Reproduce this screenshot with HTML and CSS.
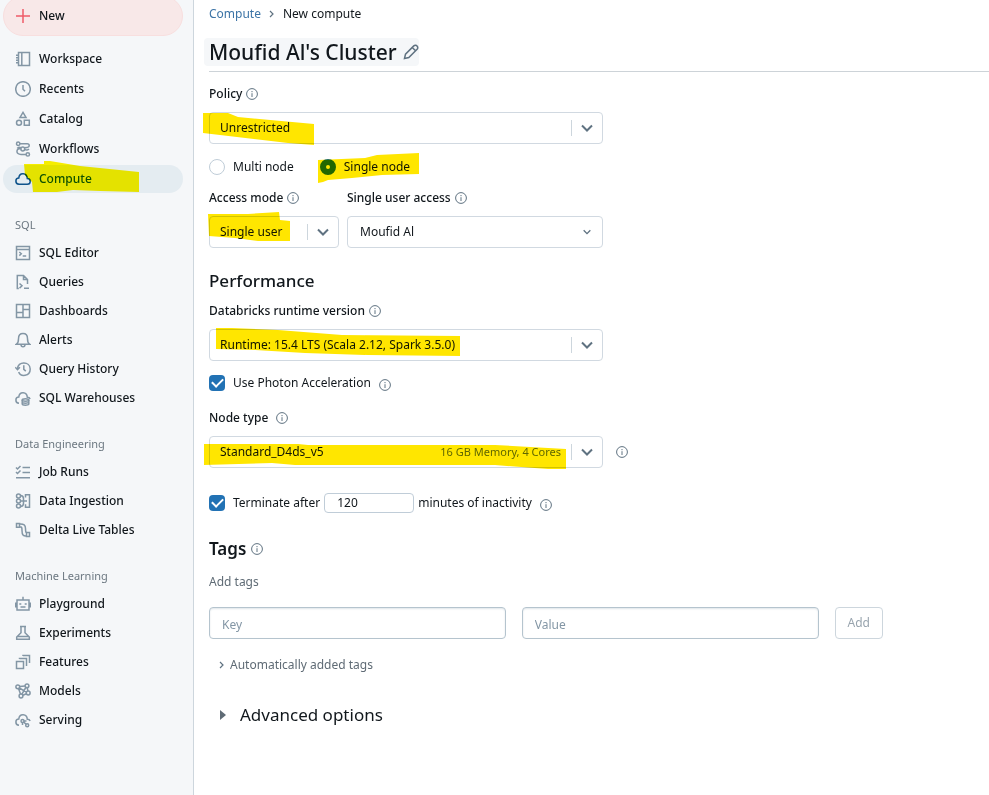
FILE: index.html
```html
<!DOCTYPE html>
<html lang="en">
<head>
<meta charset="utf-8">
<meta name="viewport" content="width=device-width, initial-scale=1">
<title>New compute</title>
<link rel="stylesheet" href="styles.css">
</head>
<body>
<svg class="sprite" aria-hidden="true">
  <symbol id="info" viewBox="0 0 12 12"><circle cx="6" cy="6" r="5.4"/><path d="M6 5.2V9M6 3v1.2"/></symbol>
  <symbol id="chevron" viewBox="0 0 12 12"><path d="M1 3.5l5 5 5-5"/></symbol>
  <symbol id="plus" viewBox="0 0 16 16"><path d="M8 1v14M1 8h14"/></symbol>
  <symbol id="workspace" viewBox="0 0 16 16"><path d="M3.5 1.5h11v13h-11zM6.8 1.5v13M1 4.3h2.5M1 6.8h2.5M1 9.3h2.5M1 11.8h2.5"/></symbol>
  <symbol id="recents" viewBox="0 0 16 16"><circle cx="8" cy="8" r="7.3"/><path d="M8 4v4.3l2 2"/></symbol>
  <symbol id="catalog" viewBox="0 0 16 16"><path d="M8 1.4l3 5H5zM9.3 9.3h5v5h-5z"/><circle cx="4" cy="11.8" r="2.5"/></symbol>
  <symbol id="workflows" viewBox="0 0 16 16"><circle cx="3.2" cy="2.8" r="1.7"/><circle cx="7.8" cy="8" r="1.9"/><circle cx="12.8" cy="13.4" r="1.7"/><path d="M5 2.8h7.2c2.7 0 2.7 3.6 0 3.6l-2.8.4M6 7.6c-5.4 0-5.4 5.8 0 5.8h5M2.2 7.4c1-1.4 2.4-1.4 3.8-.8M9.7 8.4c1.6 1 3.4.8 4.2-.5"/></symbol>
  <symbol id="cloud" viewBox="0 0 16 16"><path d="M4 13.300C-.3 13 .1 7 3.800 7 4.400.9 12 1.500 12.300 7.500c4 .2 3.800 5.800 0 5.800z"/></symbol>
  <symbol id="editor" viewBox="0 0 16 16"><path d="M1.500 1.500h13v13h-13zM1.500 4.500h13M4.300 7l2 1.800-2 1.800M7.700 11h3.500"/></symbol>
  <symbol id="queries" viewBox="0 0 16 16"><path d="M3.800 14.500H2.300v-13h6.200l4 4V10M8.500 1.500v4h4M4.500 9.500l2.500 2.300-2.500 2.300M9 14.300h5"/></symbol>
  <symbol id="dashboards" viewBox="0 0 16 16"><path d="M1.500 1.500h13v13h-13zM8 1.500v13M1.500 9.500H8M8 6.500h6.500"/></symbol>
  <symbol id="alerts" viewBox="0 0 16 16"><path d="M1.500 12.200h13c-1.800-1.300-2-2.200-2-5.500C12.500 3.500 10.600 1.500 8 1.500S3.500 3.500 3.500 6.700c0 3.300-.2 4.200-2 5.500zM6 12.500c0 3 4 3 4 0"/></symbol>
  <symbol id="history" viewBox="0 0 16 16"><path d="M2.500 8C2.500-.2 15.200.2 15.200 8S5.500 16 3.700 11M.3 6.300L2.500 8.700l2.400-2.400M8.800 4.300v4l2 1.800"/></symbol>
  <symbol id="warehouse" viewBox="0 0 16 16"><path d="M4 13.300C-.3 13 .1 7 3.800 7 4.400.9 12 1.500 12.300 7.200c1.500 0 2.500.8 2.800 1.800"/><ellipse cx="10.500" cy="10" rx="3.300" ry="1.200"/><path d="M7.200 10v4c0 1.600 6.600 1.600 6.600 0v-4M7.200 12c0 1.600 6.600 1.600 6.600 0"/></symbol>
  <symbol id="runs" viewBox="0 0 16 16"><path d="M1 3.500l1.500 1.500L5.500 2M7.500 3.500h7.500M1 8l1.500 1.500 3-3M7.500 8.500h7.500M1 13.800h14"/></symbol>
  <symbol id="ingestion" viewBox="0 0 16 16"><circle cx="3.500" cy="3" r="2"/><circle cx="3.500" cy="8" r="2"/><circle cx="3.500" cy="13" r="2"/><path d="M5.500 2.500c3 0 3 2 3 3.300v4.500c0 1.500 0 3.200-3 3.200M5.500 8H12M10.500 4.500V1.700h4v12.600h-4v-3"/></symbol>
  <symbol id="delta" viewBox="0 0 16 16"><path d="M1.500 1.500h3v3.800h-3zM11.500 10.500h3v4h-3zM4.500 2c4.500-.2 6 1 6 4.500 0 2.500.2 4 1 4.500M4.500 4.800C7 4.500 7 6 7 8.500c0 4.500 1.200 5.700 4.500 5.500"/></symbol>
  <symbol id="playground" viewBox="0 0 16 16"><path d="M2 4h12v10H2zM8 4V.8M.7 6.500V11.500M15.300 6.500V11.500M4.300 8h2M9.700 8h2M5.500 11h5"/></symbol>
  <symbol id="experiments" viewBox="0 0 16 16"><path d="M5 1.500h6M6 1.500v6.200L1.700 12v2.300h12.600V12L10 7.700V1.500M2 11.500h12"/></symbol>
  <symbol id="features" viewBox="0 0 16 16"><path d="M1.500 7.500h7v7h-7zM4.500 5V4.500h7V12M8 2V1.500h6.500V9"/></symbol>
  <symbol id="models" viewBox="0 0 16 16"><circle cx="2.800" cy="3.800" r="1.900"/><circle cx="12" cy="2.800" r="1.900"/><circle cx="13.200" cy="10" r="1.900"/><circle cx="6" cy="13" r="1.900"/><path d="M4.700 3.600L10 3M3.500 5.500l2 5.600M4.300 5l7.200 4.200M12.300 4.700l.6 3.400M10.800 4.500l-4 6.800M7.900 12.300l3.500-1.500"/></symbol>
  <symbol id="serving" viewBox="0 0 16 16"><path d="M4 13.300C-.3 13 .1 7 3.800 7 4.400.9 12 1.500 12.300 7.200c1.500 0 2.500.8 2.800 1.800"/><circle cx="7.500" cy="9" r="1.500"/><circle cx="12.200" cy="13.300" r="1.500"/><path d="M8.700 10.100l2.500 2.200M9 9h2.500M7.500 10.500V13"/></symbol>
  <symbol id="pencil" viewBox="0 0 16 16"><path d="M1.500 14.500l1-4.300 8.300-8.300c1-1 2.600-.6 3.200.1s1 2.200.1 3.200l-8.300 8.300zM9.300 3.500l3.200 3.200"/></symbol>
</svg>

<div class="app">
  <aside class="sidebar">
    <button class="new" type="button"><svg class="icon"><use href="#plus"/></svg>New</button>
    <nav>
      <div class="group primary">
        <a href="#"><svg class="icon"><use href="#workspace"/></svg>Workspace</a>
        <a href="#"><svg class="icon"><use href="#recents"/></svg>Recents</a>
        <a href="#"><svg class="icon"><use href="#catalog"/></svg>Catalog</a>
        <a href="#"><svg class="icon"><use href="#workflows"/></svg>Workflows</a>
        <a href="#" class="active" aria-current="page"><svg class="icon"><use href="#cloud"/></svg>Compute
          <svg class="mark mark-compute" width="116" height="32" viewBox="24 161 116 32" aria-hidden="true"><path d="M24 164H44V161H50L80 166 139 172V192L100 191 73 190 57 192H33L32 182 25 175z"/></svg></a>
      </div>
      <h2>SQL</h2>
      <div class="group">
        <a href="#"><svg class="icon"><use href="#editor"/></svg>SQL Editor</a>
        <a href="#"><svg class="icon"><use href="#queries"/></svg>Queries</a>
        <a href="#"><svg class="icon"><use href="#dashboards"/></svg>Dashboards</a>
        <a href="#"><svg class="icon"><use href="#alerts"/></svg>Alerts</a>
        <a href="#"><svg class="icon"><use href="#history"/></svg>Query History</a>
        <a href="#"><svg class="icon"><use href="#warehouse"/></svg>SQL Warehouses</a>
      </div>
      <h2>Data Engineering</h2>
      <div class="group">
        <a href="#"><svg class="icon"><use href="#runs"/></svg>Job Runs</a>
        <a href="#"><svg class="icon"><use href="#ingestion"/></svg>Data Ingestion</a>
        <a href="#"><svg class="icon"><use href="#delta"/></svg>Delta Live Tables</a>
      </div>
      <h2>Machine Learning</h2>
      <div class="group">
        <a href="#"><svg class="icon"><use href="#playground"/></svg>Playground</a>
        <a href="#"><svg class="icon"><use href="#experiments"/></svg>Experiments</a>
        <a href="#"><svg class="icon"><use href="#features"/></svg>Features</a>
        <a href="#"><svg class="icon"><use href="#models"/></svg>Models</a>
        <a href="#"><svg class="icon"><use href="#serving"/></svg>Serving</a>
      </div>
    </nav>
  </aside>

  <main>
    <header>
      <nav class="crumbs" aria-label="Breadcrumb"><a href="#">Compute</a><svg class="crumb-arrow" viewBox="0 0 6 8"><path d="M1 1l3 3-3 3"/></svg><span>New compute</span></nav>
      <h1>Moufid Al's Cluster<svg class="pencil"><use href="#pencil"/></svg></h1>
    </header>

    <form class="form">
      <div class="field">
        <div class="label"><label for="policy">Policy</label><svg class="info"><use href="#info"/></svg></div>
        <div class="select split">
          <select id="policy"><option>Unrestricted</option></select>
          <svg class="chevron"><use href="#chevron"/></svg>
          <svg class="mark mark-policy" width="111" height="32" viewBox="203 113 111 32" aria-hidden="true"><path d="M203 113H228L238 117 314 124V145L288 143 203 133z"/></svg>
        </div>
      </div>

      <div class="radios">
        <label><input type="radio" name="nodes">Multi node</label>
        <label><input type="radio" name="nodes" checked>Single node
          <svg class="mark mark-node" width="101" height="30" viewBox="318 153 101 30" aria-hidden="true"><path d="M318 160L365 158 377 155 419 153V174L382 175 352 178 328 180 323 182 318 183z"/></svg></label>
      </div>

      <div class="pair">
        <div class="field">
          <div class="label"><label for="mode">Access mode</label><svg class="info"><use href="#info"/></svg></div>
          <div class="select split">
            <select id="mode"><option>Single user</option></select>
            <svg class="chevron"><use href="#chevron"/></svg>
            <svg class="mark mark-mode" width="82" height="29" viewBox="208 212 82 29" aria-hidden="true"><path d="M208 214H248L279 212 280 220 290 221V241H258L235 238 209 236z"/></svg>
          </div>
        </div>
        <div class="field">
          <div class="label"><label for="user">Single user access</label><svg class="info"><use href="#info"/></svg></div>
          <div class="select plain">
            <select id="user"><option>Moufid Al</option></select>
            <svg class="chevron"><use href="#chevron"/></svg>
          </div>
        </div>
      </div>

      <h2>Performance</h2>
      <div class="field">
        <div class="label"><label for="runtime">Databricks runtime version</label><svg class="info"><use href="#info"/></svg></div>
        <div class="select split">
          <select id="runtime"><option>Runtime: 15.4 LTS (Scala 2.12, Spark 3.5.0)</option></select>
          <svg class="chevron"><use href="#chevron"/></svg>
          <svg class="mark mark-runtime" width="244" height="28" viewBox="216 328 244 28" aria-hidden="true"><path d="M216 328H232L278 330 342 335 460 336V356L368 355 305 353 255 350 216 349z"/></svg>
        </div>
      </div>
      <div class="check photon"><input type="checkbox" id="photon" checked><label for="photon">Use Photon Acceleration</label><svg class="info"><use href="#info"/></svg></div>

      <div class="field">
        <div class="label wide"><label for="node">Node type</label><svg class="info"><use href="#info"/></svg></div>
        <div class="node-row">
          <div class="select split">
            <select id="node"><option>Standard_D4ds_v5</option></select>
            <span class="spec">16 GB Memory, 4 Cores</span>
            <svg class="chevron"><use href="#chevron"/></svg>
            <svg class="mark mark-type" width="362" height="25" viewBox="204 444 362 25" aria-hidden="true"><path d="M204 444H298L308 445H495L566 449V469H548L495 465H295L272 463 204 465z"/></svg>
          </div>
          <svg class="info"><use href="#info"/></svg>
        </div>
      </div>
      <div class="check terminate"><input type="checkbox" id="terminate" checked><label for="terminate">Terminate after</label><input class="minutes" type="text" value="120" aria-label="Minutes"><span>minutes of inactivity</span><svg class="info"><use href="#info"/></svg></div>

      <h2 class="tags-title">Tags<svg class="info"><use href="#info"/></svg></h2>
      <p class="hint">Add tags</p>
      <div class="tags">
        <input type="text" placeholder="Key" aria-label="Key">
        <input type="text" placeholder="Value" aria-label="Value">
        <button type="button">Add</button>
      </div>
      <button class="auto" type="button"><svg class="crumb-arrow" viewBox="0 0 6 8"><path d="M1 1l3 3-3 3"/></svg>Automatically added tags</button>
      <button class="advanced" type="button"><svg class="triangle" viewBox="0 0 6 10"><path d="M0 0l6 5-6 5z"/></svg>Advanced options</button>
    </form>
  </main>
</div>
</body>
</html>
```
FILE: styles.css
```css
* { box-sizing: border-box; }

body {
  margin: 0;
  background: #fff;
  color: #11171c;
  font: 12px/20px "Segoe UI", "Noto Sans", sans-serif;
}

button, input, select { font: inherit; color: inherit; margin: 0; }
h1, h2, p { margin: 0; }
a { text-decoration: none; color: inherit; }
svg { fill: none; stroke: currentColor; flex: none; }
.sprite { position: absolute; width: 0; height: 0; }

.app { display: flex; min-height: 100vh; overflow: hidden; }

/* Sidebar */
.sidebar {
  flex: 0 0 194px;
  padding: 0 10px 0 3px;
  background: #f5f7f9;
  border-right: 1px solid #cdd6dd;
  font-weight: 500;
}
.icon { width: 16px; height: 16px; color: #8396a5; stroke-width: 1.5; }
.new, .group a {
  display: flex;
  align-items: center;
  gap: 8px;
  width: 100%;
  padding: 0 12px;
  border-radius: 20px;
}
.new {
  height: 40px;
  margin: -4px 0 9px;
  border: 1px solid #f8dfdf;
  padding: 0 11px;
  background: #f8e8e8;
}
.new .icon { color: #ee5b68; }
.group { display: grid; gap: 1px; }
.primary { gap: 2px; }
.group a { position: relative; height: 28px; }
.group .active { background: #e4ecf1; color: #0e538b; }
.active .icon { color: #0e538b; }
.sidebar h2 {
  margin: 22px 12px 4px;
  color: #6b7780;
  font-size: 11px;
  line-height: 20px;
  font-weight: 400;
}

/* Highlighter strokes over the controls */
.mark {
  position: absolute;
  fill: #ffe600;
  stroke: none;
  mix-blend-mode: multiply;
  pointer-events: none;
}
.mark-compute { left: 21px; top: -4px; fill: #fff500; }
.mark-policy { left: -6px; top: 1px; }
.mark-node { left: -2px; top: -4px; }
.mark-mode { left: -1px; top: -4px; }
.mark-runtime { left: 7px; top: -1px; }
.mark-type { left: -5px; top: 8px; }

/* Main column */
main { flex: 1; min-width: 0; padding: 4px 0 24px 15px; }
header { border-bottom: 1px solid #cdd3d8; padding-bottom: 5px; }
.crumbs { display: flex; align-items: center; gap: 8px; }
.crumbs a { color: #3c74a6; }
.crumb-arrow { width: 6px; height: 8px; color: #5f7281; stroke-width: 1.2; }
h1 {
  display: flex;
  align-items: center;
  gap: 6px;
  width: fit-content;
  margin: 14px 0 0 -5px;
  padding: 0 0 0 5px;
  border-radius: 4px;
  background: #f5f7f9;
  font-size: 21px;
  line-height: 28px;
  font-weight: 500;
}
.pencil { width: 16px; height: 16px; color: #5f7281; stroke-width: 1.5; }
.info { width: 12px; height: 12px; color: #5f7281; stroke-width: 1; }

.form { margin-top: 12px; }
.field { max-width: 394px; }
.label { display: flex; align-items: center; gap: 4px; margin-bottom: 8px; font-weight: 500; }
.label.wide { gap: 8px; }

.select {
  position: relative;
  display: grid;
  grid-template-columns: 1fr auto 32px;
  align-items: center;
  height: 32px;
  flex: 1;
}
.select select {
  grid-area: 1 / 1 / 2 / 4;
  width: 100%;
  height: 32px;
  padding: 0 32px 0 10px;
  border: 1px solid #d1d9e1;
  border-radius: 4px;
  background: #fff;
  appearance: none;
}
.select .chevron {
  grid-area: 1 / 3;
  box-sizing: content-box;
  width: 12px;
  height: 12px;
  padding: 2px 8px 2px 9px;
  border-left: 1px solid #cdd6dd;
  color: #5f7281;
  stroke-width: 2;
  pointer-events: none;
}
.select .spec {
  grid-area: 1 / 2;
  padding-right: 10px;
  color: #5f7281;
  font-size: 11px;
  pointer-events: none;
}
.plain select { padding-left: 12px; }
.plain .chevron { width: 8px; height: 8px; border: 0; padding: 0 12px; }

.radios { display: flex; gap: 26px; margin: 13px 0 11px; }
.radios label { position: relative; display: flex; align-items: center; gap: 8px; }
input[type="radio"] {
  appearance: none;
  width: 16px;
  height: 16px;
  border: 1px solid #c0cdd8;
  border-radius: 50%;
}
input[type="radio"]:checked { border: 6px solid #2272b4; }

.pair { display: grid; grid-template-columns: 130px 1fr; gap: 8px; max-width: 394px; }

.form h2 { margin: 21px 0 8px; font-size: 17px; line-height: 24px; font-weight: 500; }

.check { display: flex; align-items: center; gap: 8px; }
.check .info { margin-top: 3px; }
input[type="checkbox"] {
  appearance: none;
  width: 16px;
  height: 16px;
  border-radius: 4px;
  background: #2272b4;
  display: grid;
  place-items: center;
}
input[type="checkbox"]:checked::after {
  content: "";
  width: 9px;
  height: 5px;
  margin-bottom: 3px;
  border: solid #fff;
  border-width: 0 0 2px 2px;
  transform: rotate(-45deg);
}
.photon { margin: 12px 0 15px; }
.node-row { display: flex; align-items: center; gap: 13px; width: calc(100% + 25px); }
.terminate { margin-top: 25px; }
.terminate label { margin-right: -4px; }
.terminate span { margin-left: -4px; }
.minutes {
  width: 90px;
  height: 20px;
  padding: 0 12px;
  border: 1px solid #c0cdd8;
  border-radius: 4px;
}

.form .tags-title { display: flex; align-items: center; gap: 5px; margin: 24px 0 11px; font-weight: 600; }
.hint { color: #5f6b75; }
.tags {
  display: grid;
  grid-template-columns: 1fr 1fr auto;
  gap: 16px;
  max-width: 674px;
  margin: 15px 0 16px;
}
.tags input {
  min-width: 0;
  height: 32px;
  padding: 2px 12px 0;
  border: 1px solid #b5c4ce;
  border-radius: 4px;
  box-shadow: inset 0 1px 2px #dfe5e9;
}
.tags input::placeholder { color: #8396a5; }
.tags button {
  height: 32px;
  padding: 0 12px;
  border: 1px solid #cdd6dd;
  border-radius: 4px;
  background: #fff;
  color: #98a4ae;
}
.auto, .advanced { display: flex; align-items: center; padding: 0; border: 0; background: none; }
.auto { gap: 5px; margin-left: 10px; color: #5f6b75; }
.advanced { gap: 14px; margin: 28px 0 0 11px; font-size: 17px; line-height: 24px; }
.triangle { width: 6px; height: 10px; fill: #5f6b75; stroke: none; }
```
